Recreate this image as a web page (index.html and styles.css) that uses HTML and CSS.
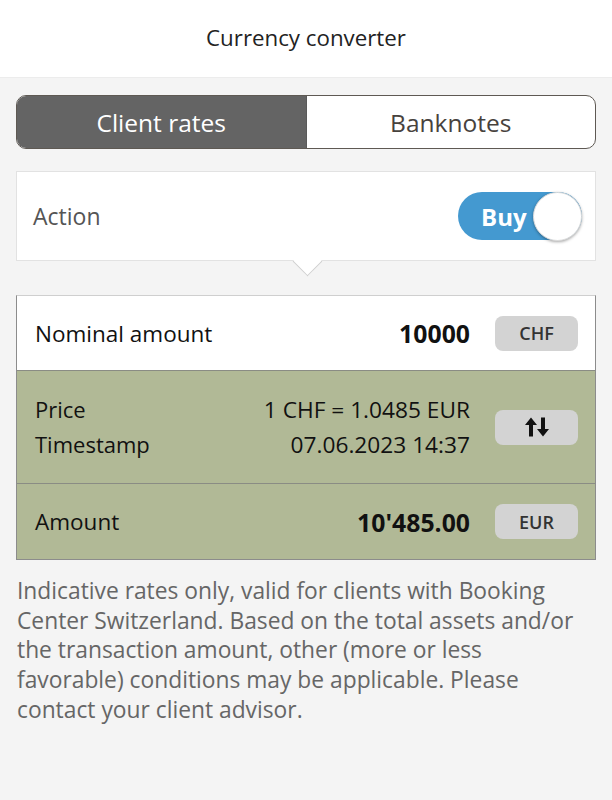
FILE: index.html
```html
<!DOCTYPE html>
<html>
<head>
<meta charset="utf-8">
<link rel="stylesheet" href="styles.css">
</head>
<body>
<header class="topbar"><h1 class="title">Currency converter</h1></header>
<main class="content">
  <div class="segmented">
    <div class="seg seg-active">Client rates</div>
    <div class="seg">Banknotes</div>
  </div>
  <div class="action-card">
    <span class="action-label">Action</span>
    <div class="toggle"><span class="toggle-text">Buy</span><span class="knob"></span></div>
    <span class="pointer"></span>
  </div>
  <div class="table">
    <div class="row row-white">
      <span class="label">Nominal amount</span>
      <span class="value bold">10000</span>
      <span class="btn">CHF</span>
    </div>
    <div class="row row-green row-tall">
      <div class="pairs">
        <div class="pair"><span class="label">Price</span><span class="value">1 CHF = 1.0485 EUR</span></div>
        <div class="pair"><span class="label">Timestamp</span><span class="value">07.06.2023 14:37</span></div>
      </div>
      <span class="btn">
        <svg width="28" height="22" viewBox="0 0 28 22"><path d="M8 1.5 L2 9 H6 V20.5 H10 V9 H14 Z" fill="#111"/><path d="M20 20.5 L14 13 H18 V1.5 H22 V13 H26 Z" fill="#111"/></svg>
      </span>
    </div>
    <div class="row row-green row-last">
      <span class="label">Amount</span>
      <span class="value bold">10'485.00</span>
      <span class="btn">EUR</span>
    </div>
  </div>
  <p class="note">Indicative rates only, valid for clients with Booking Center Switzerland. Based on the total assets and/or the transaction amount, other (more or less favorable) conditions may be applicable. Please contact your client advisor.</p>
</main>
</body>
</html>
```
FILE: styles.css
```css
* { box-sizing: border-box; }
html, body { margin: 0; padding: 0; }
body {
  background: #f4f4f4;
  font-family: "Open Sans", "Noto Sans", sans-serif;
  width: 612px;
  height: 800px;
  overflow: hidden;
}
.topbar {
  height: 78px;
  background: #fff;
  display: flex;
  align-items: center;
  justify-content: center;
  padding-bottom: 3px;
  border-bottom: 1px solid #ececec;
}
.title {
  margin: 0;
  font-weight: 400;
  font-size: 22.3px;
  color: #222;
}
.content { padding: 17px 16px 0; }
.segmented {
  display: flex;
  height: 54px;
  border: 1.5px solid #5e5953;
  border-radius: 10px;
  overflow: hidden;
  background: #fff;
}
.seg {
  flex: 1;
  display: flex;
  align-items: center;
  justify-content: center;
  font-size: 24.5px;
  color: #47423d;
}
.seg-active { background: #646464; color: #fff; border-right: 1px solid #5a5a5a; }
.action-card {
  position: relative;
  margin-top: 22px;
  height: 90px;
  background: #fff;
  border: 1px solid #e2e2e2;
  display: flex;
  align-items: center;
  justify-content: space-between;
  padding: 0 13px 0 16px;
}
.action-label { font-size: 23px; color: #555; }
.toggle {
  width: 124px;
  height: 48px;
  border-radius: 24px;
  background: #4499d0;
  display: flex;
  align-items: center;
  justify-content: space-between;
  padding-left: 23px;
}
.toggle-text { color: #fff; font-weight: 700; font-size: 24px; }
.knob {
  width: 49px;
  height: 49px;
  border-radius: 50%;
  background: #fff;
  box-shadow: 0 1px 3px rgba(0,0,0,0.35);
  border: 1px solid #ddd;
}
.pointer {
  position: absolute;
  left: 280px;
  bottom: -12px;
  width: 21px;
  height: 21px;
  background: #fff;
  border-right: 1px solid #cfcfcf;
  border-bottom: 1px solid #cfcfcf;
  transform: rotate(45deg);
}
.table {
  margin-top: 34px;
  border: 1.5px solid #8c8c8c;
  border-top-color: #cfcfcf;
}
.row {
  display: flex;
  align-items: center;
  height: 74px;
  padding: 0 17px 0 18px;
}
.row-white { background: #fff; }
.row-green { background: #b1b996; border-top: 1.5px solid #8a8c84; }
.row-tall { height: 113px; }
.row-last { height: 76px; }
.label { font-size: 22.5px; color: #111; flex: 1; }
.value { font-size: 22.7px; color: #111; text-align: right; margin-right: 25px; }
.bold { font-weight: 700; font-size: 24.8px; }
.btn {
  width: 83px;
  height: 35px;
  border-radius: 8px;
  background: #d3d3d3;
  display: flex;
  align-items: center;
  justify-content: center;
  font-size: 18px;
  font-weight: 600;
  color: #333;
}
.pairs { flex: 1; display: flex; flex-direction: column; gap: 4px; margin-right: 25px; }
.pair { display: flex; }
.pair .value { margin-right: 0; }
.pair .label { font-size: 22px; }
.note {
  margin: 16px 16px 0 1px;
  font-size: 22.8px;
  line-height: 29.7px;
  color: #666;
}
```
